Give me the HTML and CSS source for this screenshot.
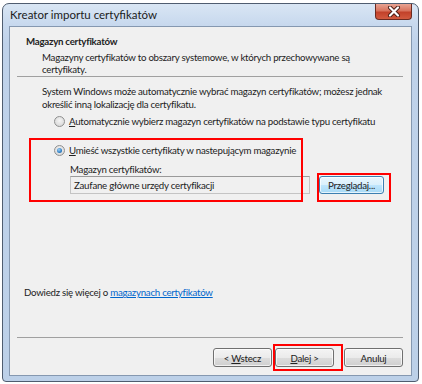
FILE: index.html
```html
<!DOCTYPE html>
<html lang="pl">
<head>
  <meta charset="UTF-8" />
  <title>Kreator importu certyfikatów</title>
  <link rel="stylesheet" href="styles.css">
</head>
<body>
  <div class="window">
    <div class="titlebar">
      <span class="title">Kreator importu certyfikatów</span>
      <button class="close" type="button" aria-label="Zamknij">
        <svg width="14" height="11" viewBox="0 0 14 11">
          <path d="M3 1.5 L11 9.5 M11 1.5 L3 9.5" stroke="#4a1c14" stroke-width="4" stroke-linecap="round" />
          <path d="M3 1.5 L11 9.5 M11 1.5 L3 9.5" stroke="#fff" stroke-width="2.2" stroke-linecap="round" />
        </svg>
      </button>
    </div>

    <div class="client">
      <div class="header">
        <h1>Magazyn certyfikatów</h1>
        <p>Magazyny certyfikatów to obszary systemowe, w których przechowywane są<br>certyfikaty.</p>
      </div>

      <div class="content">
        <p class="intro">System Windows może automatycznie wybrać magazyn certyfikatów; możesz jednak<br>określić inną lokalizację dla certyfikatu.</p>

        <label class="radio">
          <span class="radio-dot"></span>
          <span><u>A</u>utomatycznie wybierz magazyn certyfikatów na podstawie typu certyfikatu</span>
        </label>

        <div class="store-group">
          <label class="radio checked">
            <span class="radio-dot"></span>
            <span><u>U</u>mieść wszystkie certyfikaty w nastepującym magazynie</span>
          </label>
          <div class="store-label">Magazyn certyfikatów:</div>
          <div class="store-row">
            <div class="field">Zaufane główne urzędy certyfikacji</div>
            <button class="btn default" type="button">Przeglądaj...</button>
          </div>
        </div>

        <p class="learn">Dowiedz się więcej o <a href="#">magazynach certyfikatów</a></p>
      </div>

      <div class="footer">
        <button class="btn" type="button">&lt; <u>W</u>stecz</button>
        <button class="btn" type="button"><u>D</u>alej &gt;</button>
        <button class="btn cancel" type="button">Anuluj</button>
      </div>
    </div>

    <!-- red annotation boxes drawn over the screenshot -->
    <div class="mark mark-group"></div>
    <div class="mark mark-browse"></div>
    <div class="mark mark-next"></div>
  </div>
</body>
</html>
```

FILE: styles.css
```css
* {
  box-sizing: border-box;
  margin: 0;
  padding: 0;
}

body {
  background: #fff;
  font-family: Lato, 'Open Sans', sans-serif;
  font-size: 9.7px;
  letter-spacing: -0.25px;
  color: #222;
}

.window {
  position: relative;
  width: 417px;
  height: 379px;
  margin: 3px 0 0 2px;
  display: flex;
  flex-direction: column;
  padding: 0 6px 5px;
  border: 1px solid #4f5d70;
  border-radius: 7px 7px 4px 4px;
  background: linear-gradient(to bottom, #d9e6f4 0%, #c8d9ee 20px, #bfd2ea 40px, #bcd0e8 100%);
}

.titlebar {
  height: 22px;
  display: flex;
  align-items: flex-start;
  justify-content: space-between;
}

.title {
  padding: 4px 0 0 1px;
  font-size: 11.5px;
  letter-spacing: 0;
  color: #1b1b1b;
}

.close {
  width: 37px;
  height: 16px;
  border: 1px solid #6b2a20;
  border-top: none;
  border-radius: 0 0 4px 4px;
  background: linear-gradient(to bottom, #e8a493 0%, #d8735d 45%, #c2412a 55%, #d25a3f 100%);
  display: flex;
  align-items: center;
  justify-content: center;
}

.client {
  flex: 1;
  display: flex;
  flex-direction: column;
  background: #f0f0f0;
  border: 1px solid #8598b0;
  white-space: nowrap;
}

.header {
  padding: 8px 0 0 9px;
  height: 50px;
  margin: 0 8px 0 7px;
  border-bottom: 1px solid #a0a0a0;
}

.header h1 {
  font-size: 9.7px;
  font-weight: 700;
  line-height: 13px;
}

.header p {
  margin: 3px 0 0 16px;
  line-height: 12px;
}

.content {
  flex: 1;
  display: flex;
  flex-direction: column;
  padding: 8px 0 0 32px;
}

.intro {
  line-height: 13px;
}

.radio {
  display: flex;
  align-items: center;
  gap: 4px;
  margin-left: 12px;
  height: 14px;
}

.content > .radio {
  margin-top: 3px;
}

.radio-dot {
  width: 11px;
  height: 11px;
  border-radius: 50%;
  border: 1px solid #8e8f8f;
  background: radial-gradient(circle at 50% 40%, #f4f4f4 0%, #dcdcdc 70%, #cfcfcf 100%);
  display: flex;
  align-items: center;
  justify-content: center;
}

.radio.checked .radio-dot::after {
  content: '';
  width: 5px;
  height: 5px;
  border-radius: 50%;
  background: radial-gradient(circle at 40% 35%, #9fd0f5 0%, #2f7fc4 60%, #1b5b95 100%);
}

.store-group {
  margin-top: 15px;
}

.store-label {
  margin: 6px 0 0 28px;
  line-height: 13px;
}

.store-row {
  display: flex;
  align-items: center;
  margin: 0 0 0 28px;
}

.field {
  width: 240px;
  height: 18px;
  padding: 2px 3px;
  line-height: 13px;
  border: 1px solid #c4c4c4;
  border-top-color: #9a9a9a;
  background: #f0f0f0;
}

.btn {
  height: 18px;
  padding: 0 6px;
  font-family: inherit;
  font-size: 9.7px;
  letter-spacing: inherit;
  color: #222;
  border: 1px solid #707070;
  border-radius: 3px;
  background: linear-gradient(to bottom, #f4f4f4 0%, #ebebeb 50%, #dddddd 51%, #cfcfcf 100%);
  box-shadow: inset 0 0 0 1px rgba(255, 255, 255, 0.7);
}

.btn.default {
  margin-left: 9px;
  width: 65px;
  border-color: #3c7fb1;
  background: linear-gradient(to bottom, #eaf6fd 0%, #d9f0fc 50%, #bee6fd 51%, #a7d9f5 100%);
}

.learn {
  margin: auto 0 38px -18px;
  line-height: 13px;
}

.learn a {
  color: #0066cc;
}

.footer {
  display: flex;
  justify-content: flex-end;
  padding: 10px 0 8px;
  margin: 0 8px 0 7px;
  border-top: 1px solid #a0a0a0;
  gap: 3px;
}

.footer .btn {
  width: 59px;
  height: 19px;
}

.footer .cancel {
  margin-left: 7px;
}

.mark {
  position: absolute;
  border: 2px solid #f00;
}

.mark-group {
  left: 26px;
  top: 134px;
  width: 274px;
  height: 64px;
}

.mark-browse {
  left: 314px;
  top: 169px;
  width: 74px;
  height: 29px;
}

.mark-next {
  left: 270px;
  top: 340px;
  width: 70px;
  height: 27px;
}
```
